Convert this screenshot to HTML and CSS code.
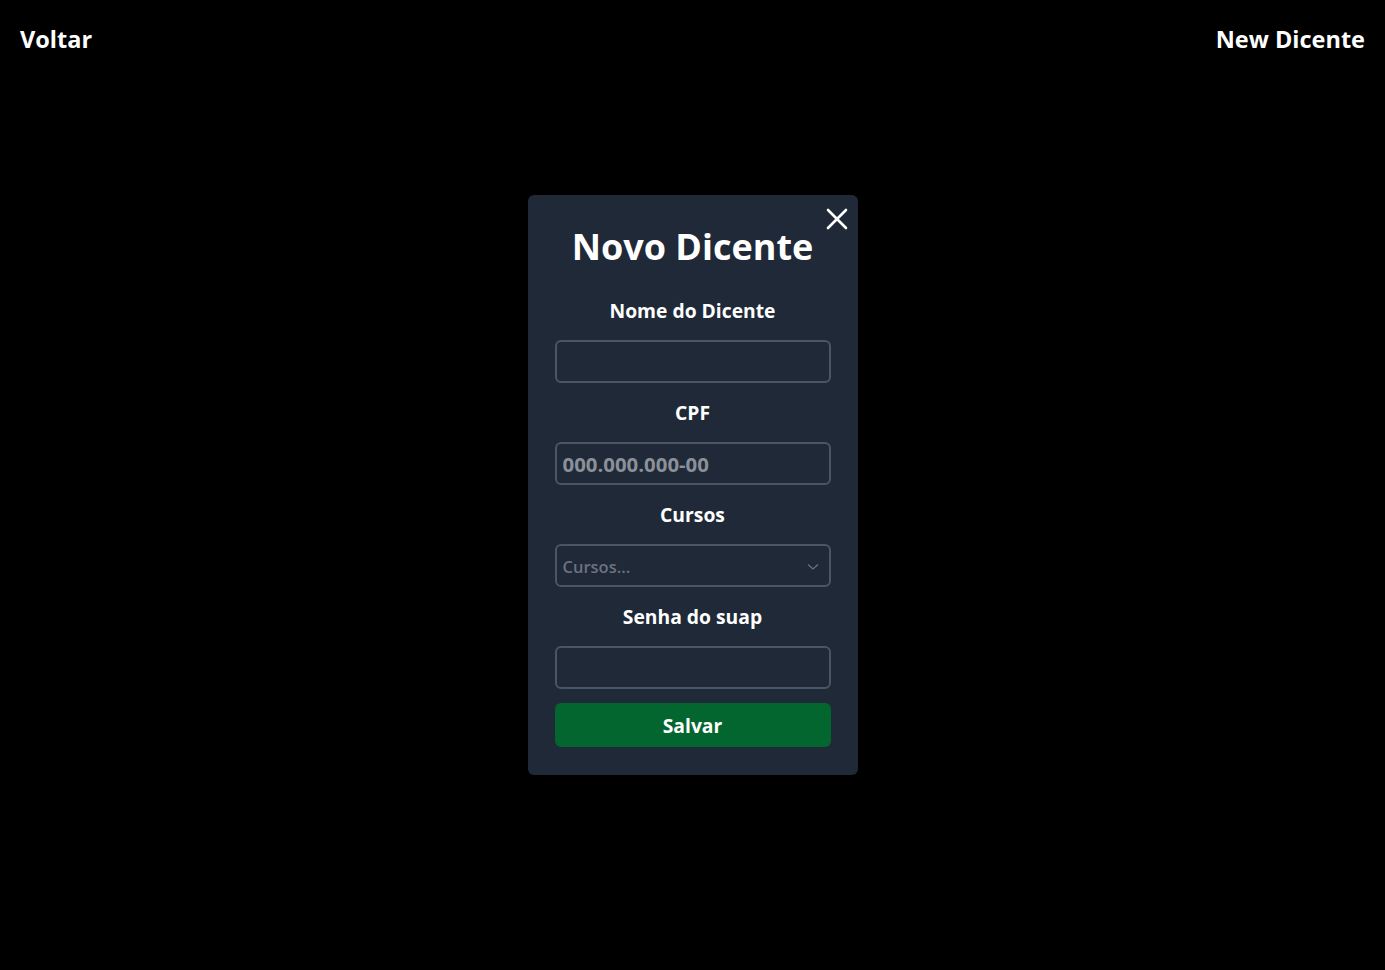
FILE: index.html
```html
<!DOCTYPE html>
<html lang="pt-BR">
<head>
<meta charset="utf-8">
<title>New Dicente</title>
<link rel="stylesheet" href="styles.css">
</head>
<body>
<header class="topbar">
  <a class="back" href="#">Voltar</a>
  <h1 class="page-title">New Dicente</h1>
</header>
<main class="stage">
  <div class="modal">
    <button class="close" aria-label="Fechar">
      <svg width="22" height="22" viewBox="0 0 22 22"><path d="M2 2 L20 20 M20 2 L2 20" stroke="#fff" stroke-width="2.6" stroke-linecap="round"/></svg>
    </button>
    <h2 class="modal-title">Novo Dicente</h2>
    <form class="form">
      <label class="label">Nome do Dicente</label>
      <input class="field" type="text">
      <label class="label">CPF</label>
      <input class="field cpf" type="text" placeholder="000.000.000-00">
      <label class="label">Cursos</label>
      <div class="field select">
        <span class="select-text">Cursos...</span>
        <svg width="12" height="8" viewBox="0 0 12 8"><path d="M1 1.5 L6 6 L11 1.5" stroke="#6b7280" stroke-width="1.3" fill="none"/></svg>
      </div>
      <label class="label">Senha do suap</label>
      <input class="field" type="password">
      <button class="save" type="button">Salvar</button>
    </form>
  </div>
</main>
</body>
</html>
```
FILE: styles.css
```css
html, body {
  margin: 0;
  padding: 0;
  background: #000;
  color: #fff;
  font-family: "Open Sans", "Noto Sans", sans-serif;
}
.topbar {
  display: flex;
  justify-content: space-between;
  align-items: center;
  padding: 22px 20px 0 20px;
  height: 34px;
}
.back, .page-title {
  color: #fff;
  text-decoration: none;
  font-size: 23.5px;
  font-weight: 700;
  margin: 0;
  line-height: 34px;
}
.stage {
  display: flex;
  justify-content: center;
  padding-top: 139px;
}
.modal {
  position: relative;
  width: 330px;
  box-sizing: border-box;
  background: #1f2937;
  border-radius: 6px;
  padding: 28px 27px 28px 27px;
}
.close {
  position: absolute;
  top: 13px;
  right: 10px;
  background: none;
  border: 0;
  padding: 0;
  width: 22px;
  height: 22px;
  cursor: pointer;
}
.close svg { display: block; }
.modal-title {
  margin: 0;
  text-align: center;
  font-size: 36px;
  line-height: 48px;
  font-weight: 700;
}
.form {
  display: flex;
  flex-direction: column;
  margin-top: 26px;
}
.label {
  text-align: center;
  font-size: 19.3px;
  font-weight: 700;
  line-height: 28px;
  margin-bottom: 15px;
}
.field {
  box-sizing: border-box;
  height: 43px;
  width: 100%;
  background: #1f2937;
  border: 2px solid #4b5563;
  border-radius: 6px;
  margin: 0 0 16px 0;
  padding: 0 6px;
  font-family: inherit;
  color: #fff;
  outline: none;
}
.cpf {
  font-size: 20.4px;
  font-weight: 700;
}
.cpf::placeholder { color: #8b9099; opacity: 1; }
.select {
  display: flex;
  align-items: center;
  justify-content: space-between;
  padding: 2px 10px 0 6px;
}
.select-text {
  color: #6b7280;
  font-size: 16.5px;
  font-weight: 600;
}
.save {
  margin-top: -2px;
  height: 44px;
  border: 0;
  border-radius: 6px;
  background: #04662f;
  color: #fff;
  font-family: inherit;
  font-size: 19.3px;
  font-weight: 700;
  cursor: pointer;
}
```
